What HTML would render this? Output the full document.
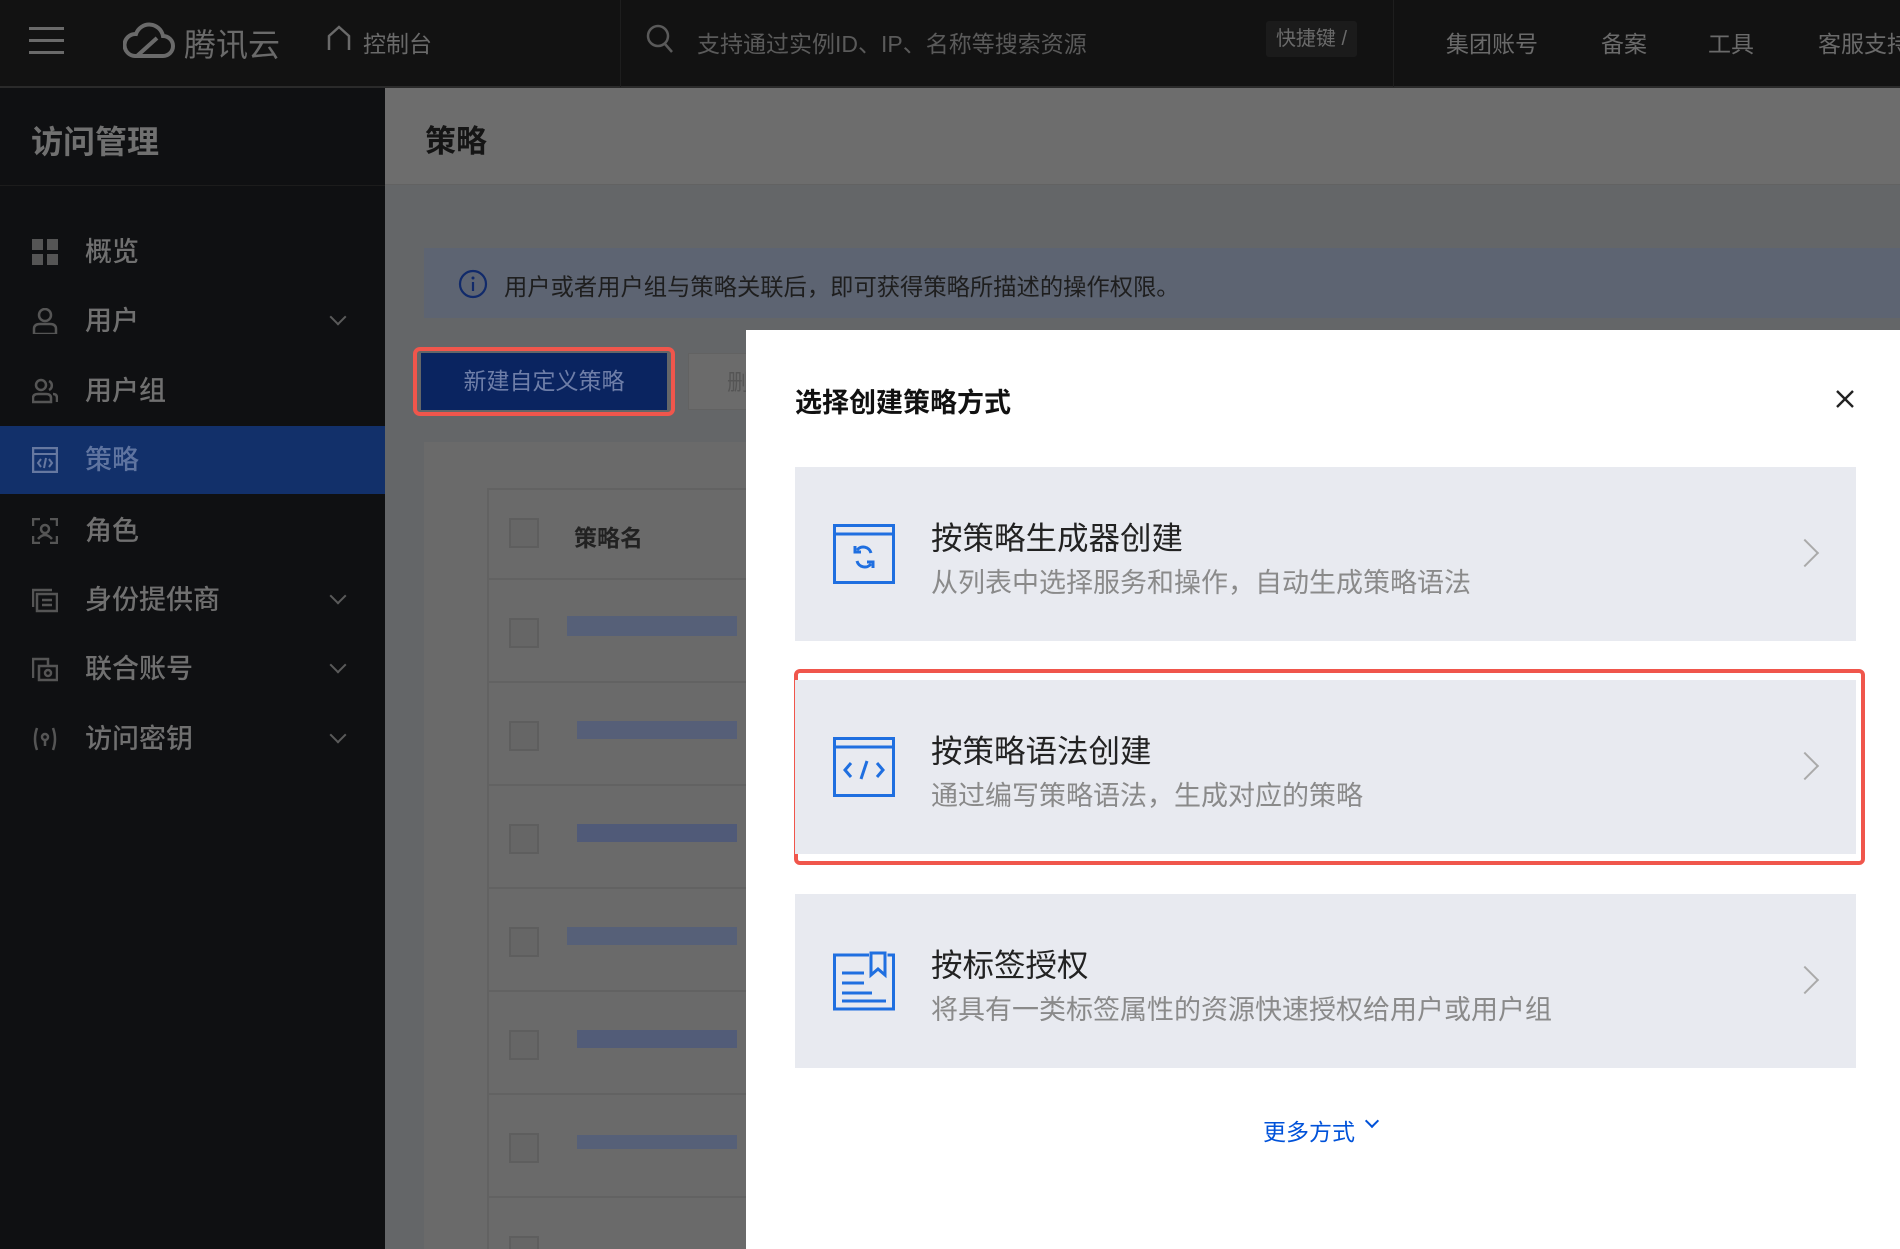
<!DOCTYPE html>
<html style="background:#0f1012;width:1900px;height:1249px;overflow:hidden"><head><meta charset="utf-8">
<style>
*{margin:0;padding:0;box-sizing:border-box}
body{width:1900px;height:1249px;overflow:hidden;background:#646668;font-family:"Liberation Sans","Noto Sans CJK SC",sans-serif;position:relative}
#w{position:relative;width:1900px;height:1249px;overflow:hidden}
.a{position:absolute}
.top{left:0;top:0;width:1900px;height:88px;background:#121212;border-bottom:2px solid #2a2a2a}
.tt{color:#6a6a6a;font-size:23px;top:25px;position:absolute;white-space:nowrap}
.side{left:0;top:88px;width:385px;height:1161px;background:#0f1012}
.mi{position:absolute;left:0;width:385px;height:68px;color:#707070;font-size:27px;line-height:68px;font-weight:500}
.mi .t{position:absolute;left:85px}
.mi .ic{position:absolute;left:32px;top:21px;width:26px;height:26px}
.mi .ch{position:absolute;left:332px;top:24px;width:12px;height:12px;border-right:2px solid #5a5a5a;border-bottom:2px solid #5a5a5a;transform:rotate(45deg)}
.card{position:absolute;left:795px;width:1061px;height:174px;background:#e8eaf0}
.card .ti{position:absolute;left:136px;top:46px;font-size:31.5px;color:#222}
.card .sub{position:absolute;left:136px;top:94px;font-size:27px;color:#8a8a8a}
.card .ar{position:absolute;left:1000px;top:76px;width:20px;height:20px;border-right:2px solid #aaa;border-top:2px solid #aaa;transform:rotate(45deg)}
.card svg{position:absolute;left:38px;top:57px}
.row{position:absolute;left:487px;width:260px;height:103px;border-top:2px solid #626262}
.cb{position:absolute;left:22px;width:30px;height:30px;border:2px solid #5e5e5e;background:#666}
</style></head><body><div id="w">
<div class="a top">
  <div class="a" style="left:29px;top:27px;width:35px;height:3px;background:#6a6a6a;box-shadow:0 12px 0 #6a6a6a,0 24px 0 #6a6a6a"></div>
  <svg class="a" style="left:123px;top:20px" width="52" height="40" viewBox="0 0 52 40"><g fill="none" stroke="#6a6a6a" stroke-width="4"><path d="M12 36 H40 a10 10 0 0 0 0-20 a14 14 0 0 0-27-2 a11 11 0 0 0-1 22z"/><path d="M14 36 L34 18"/></g></svg>
  <div class="tt" style="left:184px;font-size:32px;top:20px">腾讯云</div>
  <svg class="a" style="left:326px;top:25px" width="26" height="26" viewBox="0 0 26 26"><path d="M3 25V11L13 2l10 9v14" fill="none" stroke="#6a6a6a" stroke-width="2.5"/></svg>
  <div class="tt" style="left:363px">控制台</div>
  <div class="a" style="left:620px;top:0;width:1px;height:87px;background:#1e1e1e"></div>
  <svg class="a" style="left:646px;top:24px" width="28" height="30" viewBox="0 0 28 30"><circle cx="12" cy="12" r="10" fill="none" stroke="#5a5a5a" stroke-width="2.5"/><path d="M19 20l7 8" stroke="#5a5a5a" stroke-width="2.5"/></svg>
  <div class="tt" style="left:697px;color:#5a5a5a">支持通过实例ID、IP、名称等搜索资源</div>
  <div class="a" style="left:1266px;top:21px;width:91px;height:36px;background:#1b1b1b;border-radius:3px;color:#6a6a6a;font-size:20px;line-height:36px;text-align:center">快捷键 /</div>
  <div class="a" style="left:1393px;top:0;width:1px;height:87px;background:#1e1e1e"></div>
  <div class="tt" style="left:1446px">集团账号</div>
  <div class="tt" style="left:1601px">备案</div>
  <div class="tt" style="left:1708px">工具</div>
  <div class="tt" style="left:1818px">客服支持</div>
</div>
<div class="a side">
  <div class="a" style="left:31px;top:29px;font-size:32px;color:#707070;font-weight:bold">访问管理</div>
  <div class="a" style="left:0;top:97px;width:385px;height:1px;background:#1c1c1c"></div>
</div>
<div class="mi" style="top:218px"><svg class="ic" viewBox="0 0 26 26"><g fill="#555"><rect x="0" y="0" width="11" height="11"/><rect x="15" y="0" width="11" height="11"/><rect x="0" y="15" width="11" height="11"/><rect x="15" y="15" width="11" height="11"/></g></svg><span class="t">概览</span></div>
<div class="mi" style="top:287px"><svg class="ic" viewBox="0 0 26 26"><g fill="none" stroke="#555" stroke-width="2.5"><circle cx="13" cy="7" r="6"/><path d="M2 26v-5q0-5 6-5h10q6 0 6 5v5z"/></g></svg><span class="t">用户</span><span class="ch"></span></div>
<div class="mi" style="top:357px"><svg class="ic" viewBox="0 0 26 26"><g fill="none" stroke="#555" stroke-width="2.5"><circle cx="9" cy="7" r="5"/><path d="M1 24v-4q0-4 5-4h8q5 0 5 4v4z"/><path d="M17 3a5 5 0 0 1 0 9M21 16q4 0 4 4v4"/></g></svg><span class="t">用户组</span></div>
<div class="mi" style="top:426px;background:#12306a;color:#5f74a0"><svg class="ic" viewBox="0 0 26 26"><rect x="1" y="1" width="24" height="24" fill="none" stroke="#6678a0" stroke-width="2.5"/><path d="M1 7h24M9 12l-3 4 3 4M17 12l3 4-3 4M14 11l-2 10" fill="none" stroke="#6678a0" stroke-width="2"/></svg><span class="t">策略</span></div>
<div class="mi" style="top:497px"><svg class="ic" viewBox="0 0 26 26"><g fill="none" stroke="#555" stroke-width="2.5"><path d="M1 8V1h7M18 1h7v7M25 18v7h-7M8 25H1v-7"/><circle cx="13" cy="11" r="4"/><path d="M6 21q7-8 14 0"/></g></svg><span class="t">角色</span></div>
<div class="mi" style="top:566px"><svg class="ic" viewBox="0 0 26 26"><g fill="none" stroke="#555" stroke-width="2.5"><rect x="5" y="7" width="20" height="17"/><path d="M1 20V3h19"/><path d="M10 13h10M10 18h10"/></g></svg><span class="t">身份提供商</span><span class="ch"></span></div>
<div class="mi" style="top:635px"><svg class="ic" viewBox="0 0 26 26"><g fill="none" stroke="#555" stroke-width="2.5"><path d="M1 22V3h15v6"/><rect x="7" y="10" width="18" height="14"/><circle cx="16" cy="17" r="3"/></g></svg><span class="t">联合账号</span><span class="ch"></span></div>
<div class="mi" style="top:705px"><svg class="ic" viewBox="0 0 26 26"><g fill="none" stroke="#555" stroke-width="2.5"><path d="M5 2q-4 11 0 22M21 2q4 11 0 22"/><circle cx="13" cy="11" r="3"/><path d="M13 14v6"/></g></svg><span class="t">访问密钥</span><span class="ch"></span></div>

<div class="a" style="left:385px;top:88px;width:1515px;height:97px;background:#6d6d6d;border-bottom:1px solid #626262"></div>
<div class="a" style="left:425px;top:116px;font-size:31px;color:#151515;font-weight:bold">策略</div>
<div class="a" style="left:424px;top:248px;width:1476px;height:70px;background:#5d6472"></div>
<svg class="a" style="left:458px;top:269px" width="30" height="30" viewBox="0 0 30 30"><circle cx="15" cy="15" r="13" fill="none" stroke="#112a6a" stroke-width="2.2"/><path d="M15 13v9" stroke="#112a6a" stroke-width="2.2"/><circle cx="15" cy="9" r="1.5" fill="#112a6a"/></svg>
<div class="a" style="left:504px;top:268px;font-size:23.3px;color:#1e1e1e">用户或者用户组与策略关联后，即可获得策略所描述的操作权限。</div>
<div class="a" style="left:413px;top:347px;width:262px;height:69px;border:4px solid #f0564c;border-radius:7px"></div>
<div class="a" style="left:421px;top:353px;width:246px;height:57px;background:#0a2460;color:#6e7ea8;font-size:23px;line-height:57px;text-align:center">新建自定义策略</div>
<div class="a" style="left:688px;top:353px;width:70px;height:57px;background:#6b6b6b;border:1px solid #626262;color:#555;font-size:22px;line-height:57px;padding-left:38px">删</div>
<div class="a" style="left:424px;top:442px;width:330px;height:807px;background:#6a6a6a"></div>
<div class="a" style="left:487px;top:488px;width:260px;height:761px;border-left:2px solid #626262;border-top:2px solid #626262"></div>
<div class="cb a" style="left:509px;top:518px"></div>
<div class="a" style="left:574px;top:519px;font-size:23px;color:#222;font-weight:bold">策略名</div>
<div class="row" style="top:578px"><div class="cb" style="top:38px"></div><div class="a" style="left:80px;top:36px;width:170px;height:20px;background:#566078"></div></div>
<div class="row" style="top:681px"><div class="cb" style="top:38px"></div><div class="a" style="left:90px;top:38px;width:160px;height:18px;background:#565f78"></div></div>
<div class="row" style="top:784px"><div class="cb" style="top:38px"></div><div class="a" style="left:90px;top:38px;width:160px;height:18px;background:#505a78"></div></div>
<div class="row" style="top:887px"><div class="cb" style="top:38px"></div><div class="a" style="left:80px;top:38px;width:170px;height:18px;background:#566078"></div></div>
<div class="row" style="top:990px"><div class="cb" style="top:38px"></div><div class="a" style="left:90px;top:38px;width:160px;height:18px;background:#525c78"></div></div>
<div class="row" style="top:1093px"><div class="cb" style="top:38px"></div><div class="a" style="left:90px;top:40px;width:160px;height:14px;background:#566078"></div></div>
<div class="row" style="top:1196px;height:53px"><div class="cb" style="top:38px"></div></div>

<div class="a" style="left:746px;top:330px;width:1154px;height:919px;background:#fff"></div>
<div class="a" style="left:795px;top:381px;font-size:27px;color:#111;font-weight:bold">选择创建策略方式</div>
<svg class="a" style="left:1836px;top:390px" width="18" height="18" viewBox="0 0 18 18"><path d="M1 1l16 16M17 1L1 17" stroke="#222" stroke-width="2.4"/></svg>

<div class="card" style="top:467px">
  <svg width="62" height="60" viewBox="0 0 62 60"><rect x="1.5" y="1.5" width="59" height="57" fill="none" stroke="#1f6fe0" stroke-width="3"/><path d="M1.5 10h59" stroke="#1f6fe0" stroke-width="3"/><path d="M38 29a8 8 0 0 0-14-3M24 37a8 8 0 0 0 14 3" fill="none" stroke="#1f6fe0" stroke-width="3"/><path d="M22 22v6h6M40 44v-6h-6" fill="none" stroke="#1f6fe0" stroke-width="3"/></svg>
  <div class="ti">按策略生成器创建</div><div class="sub">从列表中选择服务和操作，自动生成策略语法</div><div class="ar"></div>
</div>
<div class="a" style="left:794px;top:669px;width:1071px;height:196px;border:4px solid #f0564c;border-radius:6px"></div>
<div class="card" style="top:680px">
  <svg width="62" height="60" viewBox="0 0 62 60"><rect x="1.5" y="1.5" width="59" height="57" fill="none" stroke="#1f6fe0" stroke-width="3"/><path d="M1.5 10h59" stroke="#1f6fe0" stroke-width="3"/><path d="M18 26l-6 7 6 7M44 26l6 7-6 7M34 24l-6 18" fill="none" stroke="#1f6fe0" stroke-width="3"/></svg>
  <div class="ti">按策略语法创建</div><div class="sub">通过编写策略语法，生成对应的策略</div><div class="ar"></div>
</div>
<div class="card" style="top:894px">
  <svg width="62" height="60" viewBox="0 0 62 60"><path d="M36 4H1.5v54h59V4h-6" fill="none" stroke="#1f6fe0" stroke-width="3"/><path d="M38 2v22l7-6 7 6V2z" fill="none" stroke="#1f6fe0" stroke-width="3"/><path d="M9 22h22M9 32h22M9 42h30M9 50h44" stroke="#1f6fe0" stroke-width="3"/></svg>
  <div class="ti">按标签授权</div><div class="sub">将具有一类标签属性的资源快速授权给用户或用户组</div><div class="ar"></div>
</div>
<div class="a" style="left:1263px;top:1113px;font-size:23px;color:#0052d9">更多方式</div>
<div class="a" style="left:1367px;top:1116px;width:10px;height:10px;border-right:2px solid #0052d9;border-bottom:2px solid #0052d9;transform:rotate(45deg)"></div>
</div></body></html>
